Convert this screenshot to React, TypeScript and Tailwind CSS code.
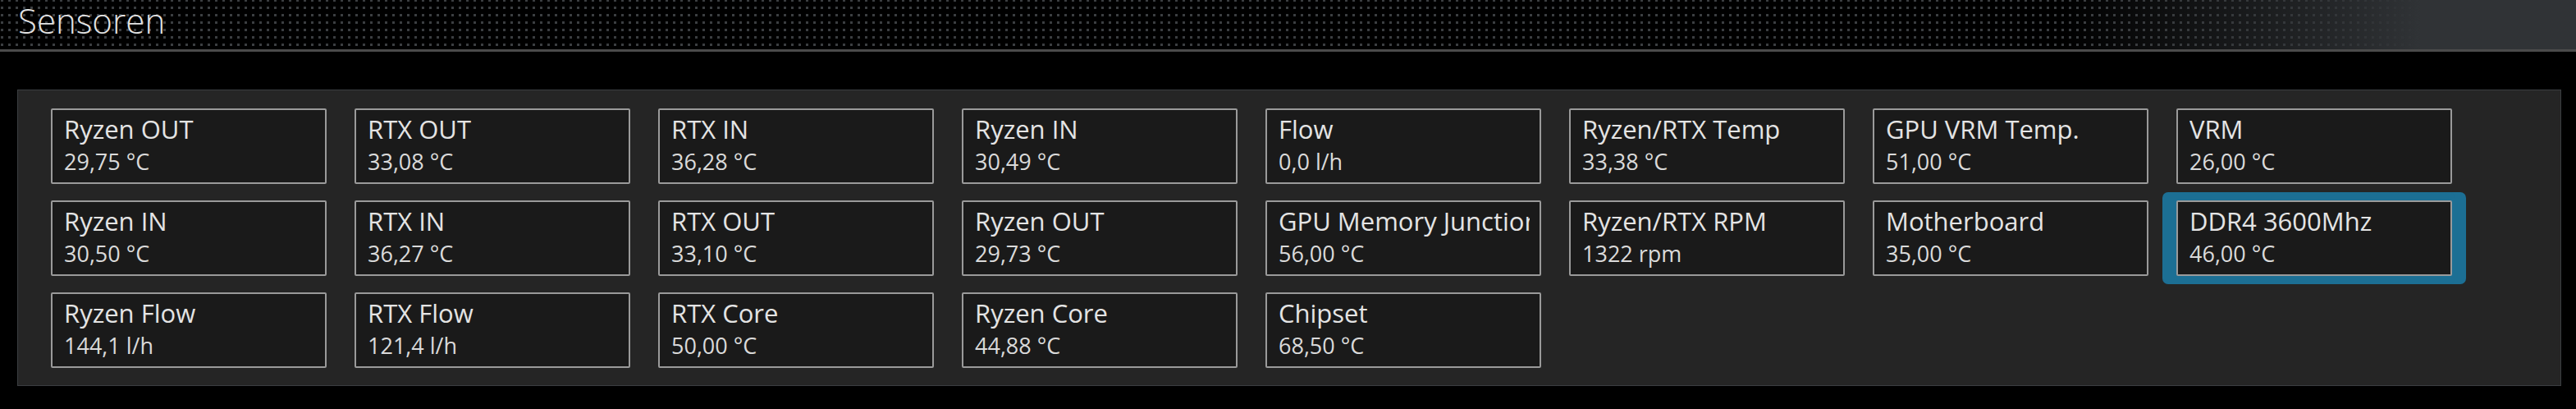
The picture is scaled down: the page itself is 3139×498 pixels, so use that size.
import React from "react";

type Sensor = { name: string; value: string; selected?: boolean };

const sensors: Sensor[] = [
  { name: "Ryzen OUT", value: "29,75 °C" },
  { name: "RTX OUT", value: "33,08 °C" },
  { name: "RTX IN", value: "36,28 °C" },
  { name: "Ryzen IN", value: "30,49 °C" },
  { name: "Flow", value: "0,0 l/h" },
  { name: "Ryzen/RTX Temp", value: "33,38 °C" },
  { name: "GPU VRM Temp.", value: "51,00 °C" },
  { name: "VRM", value: "26,00 °C" },
  { name: "Ryzen IN", value: "30,50 °C" },
  { name: "RTX IN", value: "36,27 °C" },
  { name: "RTX OUT", value: "33,10 °C" },
  { name: "Ryzen OUT", value: "29,73 °C" },
  { name: "GPU Memory Junction", value: "56,00 °C" },
  { name: "Ryzen/RTX RPM", value: "1322 rpm" },
  { name: "Motherboard", value: "35,00 °C" },
  { name: "DDR4 3600Mhz", value: "46,00 °C", selected: true },
  { name: "Ryzen Flow", value: "144,1 l/h" },
  { name: "RTX Flow", value: "121,4 l/h" },
  { name: "RTX Core", value: "50,00 °C" },
  { name: "Ryzen Core", value: "44,88 °C" },
  { name: "Chipset", value: "68,50 °C" },
];

function Card({ s }: { s: Sensor }) {
  return (
    <div
      className={
        "h-[92px] w-[336px] rounded-[2px] border-2 border-[#9a9a9a] bg-[#1a1a1a] pl-[14px] pr-[12px] pt-[3px] " +
        (s.selected
          ? "shadow-[-7px_0_0_10px_#1c6f94,7px_0_0_10px_#1c6f94]"
          : "")
      }
    >
      <div className="overflow-hidden whitespace-nowrap">
        <div className="text-[31px] leading-[40px] text-[#e4e4e4]">{s.name}</div>
        <div className="mt-[2px] text-[27px] leading-[36px] text-[#dadada]">{s.value}</div>
      </div>
    </div>
  );
}

export default function App() {
  return (
    <div className="h-[498px] w-[3139px] bg-black font-['Open_Sans','Noto_Sans',sans-serif]">
      <div className="h-[63px] border-b-[3px] border-[#4b4b4b] bg-black bg-[image:linear-gradient(to_right,transparent_80%,#303336_94%),radial-gradient(circle,#3b3e41_1.6px,transparent_2px)] bg-[size:100%_100%,9px_9px] bg-[position:0_0,-2px_-4px]">
        <div className="pl-[22px] text-[42px] font-[350] leading-[50px] text-[#e2e2e2]">Sensoren</div>
      </div>
      <div className="ml-[21px] mt-[46px] w-[3100px] border border-[#3b3e41] bg-[#252525] pb-[21px] pl-[40px] pt-[22px]">
        <div className="grid grid-cols-[repeat(8,336px)] gap-x-[34px] gap-y-[20px]">
          {sensors.map((s, i) => (
            <Card key={i} s={s} />
          ))}
        </div>
      </div>
    </div>
  );
}
